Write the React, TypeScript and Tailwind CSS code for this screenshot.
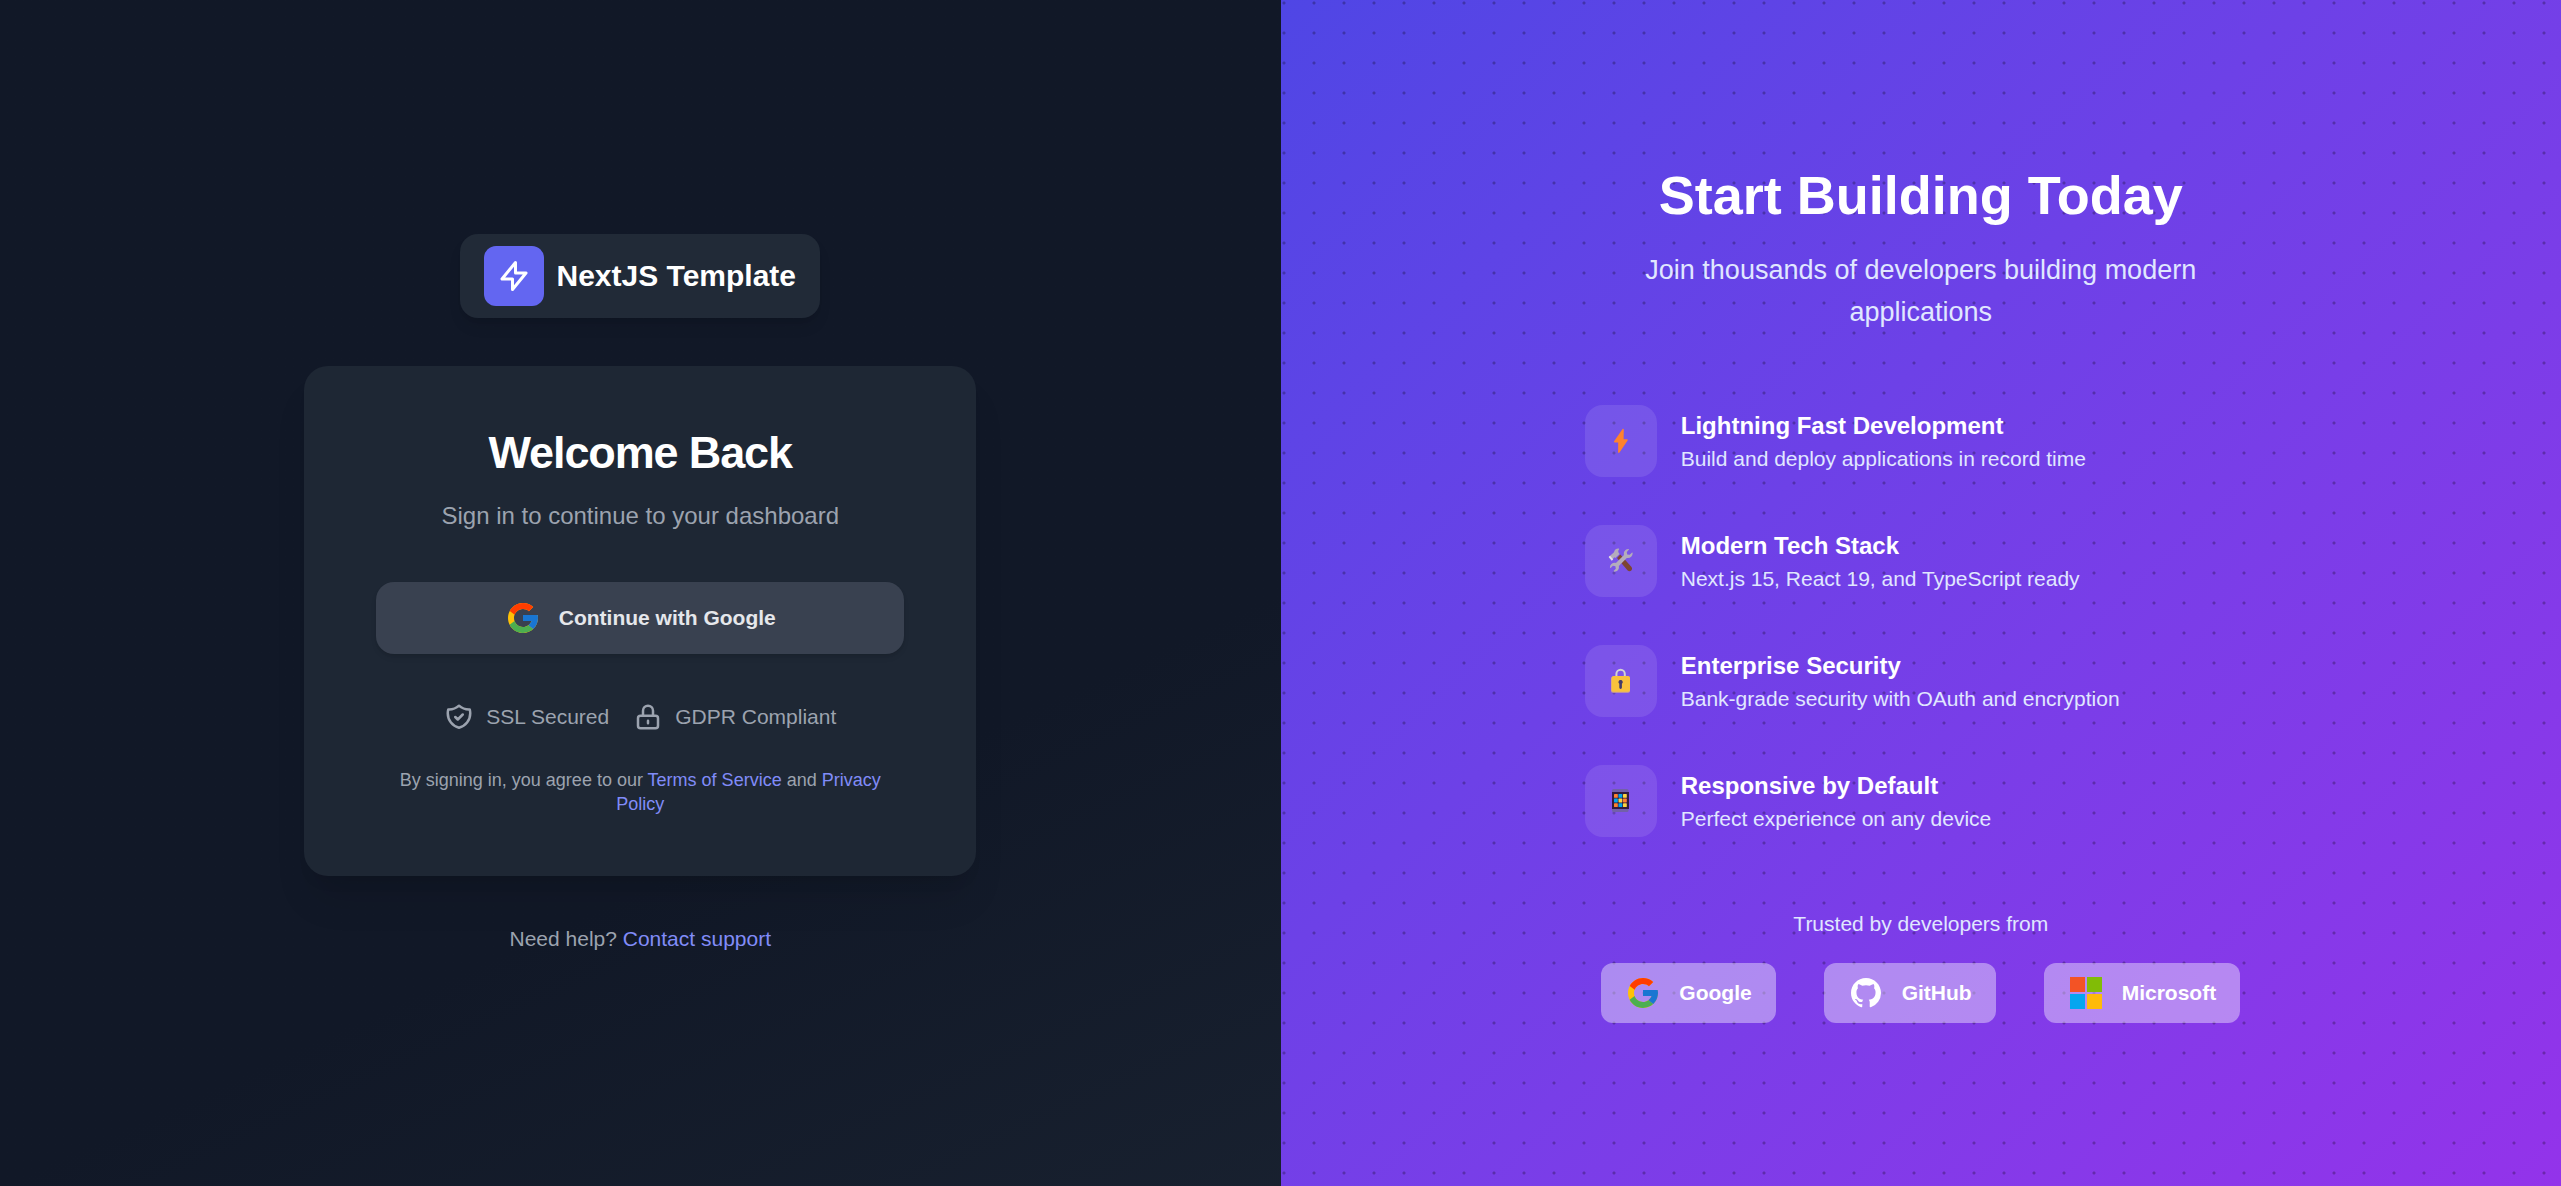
import type { ReactNode } from "react";
import { FcGoogle } from "react-icons/fc";

const outline = {
  viewBox: "0 0 24 24",
  fill: "none",
  stroke: "currentColor",
  strokeWidth: 2,
  strokeLinecap: "round",
  strokeLinejoin: "round",
  "aria-hidden": true,
} as const;

function BoltOutline() {
  return (
    <svg {...outline} className="size-9">
      <path d="M13 10V3L4 14h7v7l9-11h-7z" />
    </svg>
  );
}

function ShieldCheck() {
  return (
    <svg {...outline} className="size-[30px]">
      <path d="M9 12l2 2 4-4m5.618-4.016A11.955 11.955 0 0112 2.944a11.955 11.955 0 01-8.618 3.04A12.02 12.02 0 003 9c0 5.591 3.824 10.29 9 11.622 5.176-1.332 9-6.03 9-11.622 0-1.042-.133-2.052-.382-3.016z" />
    </svg>
  );
}

function LockOutline() {
  return (
    <svg {...outline} className="size-[30px]">
      <path d="M12 15v2m-6 4h12a2 2 0 002-2v-6a2 2 0 00-2-2H6a2 2 0 00-2 2v6a2 2 0 002 2zm10-10V7a4 4 0 00-8 0v4h8z" />
    </svg>
  );
}

function GitHubMark() {
  return (
    <svg viewBox="0 0 24 24" fill="currentColor" className="size-9" aria-hidden="true">
      <path
        fillRule="evenodd"
        clipRule="evenodd"
        d="M12 2C6.477 2 2 6.484 2 12.017c0 4.425 2.865 8.18 6.839 9.504.5.092.682-.217.682-.483 0-.237-.008-.868-.013-1.703-2.782.605-3.369-1.343-3.369-1.343-.454-1.158-1.11-1.466-1.11-1.466-.908-.62.069-.608.069-.608 1.003.07 1.531 1.032 1.531 1.032.892 1.53 2.341 1.088 2.91.832.092-.647.35-1.088.636-1.338-2.22-.253-4.555-1.113-4.555-4.951 0-1.093.39-1.988 1.029-2.688-.103-.253-.446-1.272.098-2.65 0 0 .84-.27 2.75 1.026A9.564 9.564 0 0112 6.844c.85.004 1.705.115 2.504.337 1.909-1.296 2.747-1.027 2.747-1.027.546 1.379.202 2.398.1 2.651.64.7 1.028 1.595 1.028 2.688 0 3.848-2.339 4.695-4.566 4.943.359.309.678.92.678 1.855 0 1.338-.012 2.419-.012 2.747 0 .268.18.58.688.482A10.019 10.019 0 0022 12.017C22 6.484 17.522 2 12 2z"
      />
    </svg>
  );
}

function MicrosoftLogo() {
  return (
    <svg viewBox="0 0 36 36" className="size-9" aria-hidden="true">
      <path fill="#f35325" d="M2 2h15v15H2z" />
      <path fill="#81bc06" d="M19 2h15v15H19z" />
      <path fill="#05a6f0" d="M2 19h15v15H2z" />
      <path fill="#ffba08" d="M19 19h15v15H19z" />
    </svg>
  );
}

function BoltArt() {
  return (
    <svg viewBox="0 0 32 32" className="size-8" aria-hidden="true">
      <path
        fill="#ff822d"
        d="M17.400 4.300 9.100 16.300c-.3.600 0 1.200.6 1.200h3.500l-.100 9.700c0 .9.900 1.100 1.400.4l8.100-12.100c.3-.6 0-1.200-.6-1.200h-3.400l.200-9.600c0-1-.9-1.200-1.400-.4Z"
      />
    </svg>
  );
}

function ToolsArt() {
  return (
    <svg viewBox="0 0 32 32" className="size-8" aria-hidden="true">
      <path d="m12 13 3.300-3.400 11 12.200c1 1.100 1 2.600 0 3.600s-2.600 1-3.600 0z" fill="#7d4533" />
      <path
        d="M3.700 12 9 7.200c.4-2 1.800-3.700 4.500-3.700.6 0 .8.6.5 1-.9 1.100-1 2.200-.2 3.400l.8 1.200-4.300 4-1-.9-2.600 3.200z"
        fill="#b4acbc"
      />
      <path d="m3.700 12 1.300-1.200 3.200 3.500-1.400 1.500z" fill="#e4dfe9" />
      <path
        d="M23.300 4c.5-.2.900.4.500.8l-2 2.100.4 2.500 2.500.4 2.100-2c.4-.4 1-.1.9.5-.2 3.300-2.900 5.300-5.900 4.600l-8 8c.8 3-1.300 5.600-4.500 5.800-.6 0-.9-.5-.5-.9l2-2.100-.4-2.500-2.500-.4-2 2c-.4.4-1 .1-1-.5.3-3.200 3.100-5 6-4.300l8.100-8c-.8-3 1.100-5.800 4.300-6z"
        fill="#b4acbc"
      />
    </svg>
  );
}

function LockArt() {
  return (
    <svg viewBox="0 0 32 32" className="size-8" aria-hidden="true">
      <path d="M11.400 12.500V9a4.200 4.200 0 0 1 8.400 0v3.500" fill="none" stroke="#d3d3d3" strokeWidth="2" />
      <rect x="6" y="11.500" width="19" height="16.200" rx="2" fill="#d3a58c" />
      <rect x="6.700" y="11" width="18.300" height="15.800" rx="2" fill="#f9c23c" />
      <path d="M15.600 15a2.100 2.100 0 0 0-1.300 3.800v3.800a1.300 1.300 0 0 0 2.600 0v-3.800a2.100 2.100 0 0 0-1.300-3.800z" fill="#433b6b" />
    </svg>
  );
}

const keypad = [
  ["#ff822d", "#00a6ed", "#fcd53f"],
  ["#00a6ed", "#fcd53f", "#ff822d"],
  ["#ff822d", "#00a6ed", "#fcd53f"],
];

function PhoneArt() {
  return (
    <svg viewBox="0 0 32 32" className="size-8" aria-hidden="true">
      <rect x="7" y="4" width="16.500" height="23" rx="1.500" fill="#7260a8" />
      <rect x="7" y="7" width="17" height="17" fill="#321b41" />
      {keypad.map((row, y) =>
        row.map((color, x) => (
          <rect key={`${x}-${y}`} x={9 + x * 4.5} y={9 + y * 4.6} width="3.800" height="3.800" rx=".6" fill={color} />
        )),
      )}
    </svg>
  );
}

const features: { art: ReactNode; title: string; text: string }[] = [
  { art: <BoltArt />, title: "Lightning Fast Development", text: "Build and deploy applications in record time" },
  { art: <ToolsArt />, title: "Modern Tech Stack", text: "Next.js 15, React 19, and TypeScript ready" },
  { art: <LockArt />, title: "Enterprise Security", text: "Bank-grade security with OAuth and encryption" },
  { art: <PhoneArt />, title: "Responsive by Default", text: "Perfect experience on any device" },
];

const companies: { logo: ReactNode; name: string }[] = [
  { logo: <FcGoogle className="size-9" aria-hidden="true" />, name: "Google" },
  { logo: <GitHubMark />, name: "GitHub" },
  { logo: <MicrosoftLogo />, name: "Microsoft" },
];

function SignIn() {
  return (
    <section className="flex flex-col items-center justify-center gap-12 px-6 pt-0.5 text-[21px] leading-[30px] text-[#9ca3af]">
      <div className="flex items-center gap-3 rounded-[18px] bg-[#212a37] px-6 py-3 shadow-lg">
        <div className="flex size-[60px] items-center justify-center rounded-xl bg-[#6366f1] text-white">
          <BoltOutline />
        </div>
        <span className="text-[30px] leading-[42px] font-bold text-white">NextJS Template</span>
      </div>

      <main className="w-full max-w-[672px] rounded-3xl bg-[#1e2734] px-[72px] py-[60px] text-center shadow-[0_30px_38px_-8px_rgba(0,0,0,0.1),0_12px_15px_-9px_rgba(0,0,0,0.1)]">
        <h1 className="text-[45px] leading-[54px] font-bold tracking-tight text-white">Welcome Back</h1>
        <p className="mt-[18px] text-2xl leading-9">Sign in to continue to your dashboard</p>
        <button
          type="button"
          className="mt-12 flex h-[72px] w-full items-center justify-center gap-[18px] rounded-[18px] bg-[#394150] font-bold text-[#e5e7eb] shadow-md"
        >
          <FcGoogle className="size-9" aria-hidden="true" />
          Continue with Google
        </button>
        <div className="mt-12 flex items-center justify-center gap-6">
          <span className="flex items-center gap-3">
            <ShieldCheck />
            SSL Secured
          </span>
          <span className="flex items-center gap-3">
            <LockOutline />
            GDPR Compliant
          </span>
        </div>
        <p className="mt-9 text-lg leading-6">
          By signing in, you agree to our{" "}
          <a href="#terms" className="text-[#818cf8]">Terms of Service</a> and{" "}
          <a href="#privacy" className="text-[#818cf8]">Privacy Policy</a>
        </p>
      </main>

      <p>
        Need help? <a href="#support" className="text-[#818cf8]">Contact support</a>
      </p>
    </section>
  );
}

function Showcase() {
  return (
    <section className="bg-linear-to-br from-[#4f46e5] to-[#9333ea]">
      <div className="flex h-full flex-col items-center justify-center bg-[radial-gradient(circle_at_3px_3px,rgba(0,0,0,0.26)_1px,transparent_2px)] bg-size-[30px_30px] px-6 pt-0.5 text-[21px] leading-[30px] text-[#e0e7ff]">
        <div className="w-full max-w-[672px]">
          <header className="text-center">
            <h2 className="text-[54px] leading-[60px] font-bold text-white">Start Building Today</h2>
            <p className="mt-6 text-[27px] leading-[42px]">
              Join thousands of developers building modern applications
            </p>
          </header>
          <ul className="mt-[72px] flex flex-col gap-12">
            {features.map((f) => (
              <li key={f.title} className="flex items-center gap-6">
                <div className="flex size-[72px] shrink-0 items-center justify-center rounded-[18px] bg-white/10">
                  {f.art}
                </div>
                <div>
                  <h3 className="text-2xl leading-9 font-bold text-white">{f.title}</h3>
                  <p>{f.text}</p>
                </div>
              </li>
            ))}
          </ul>
          <p className="mt-[72px] text-center">Trusted by developers from</p>
          <ul className="mt-6 flex justify-center gap-12">
            {companies.map((c) => (
              <li
                key={c.name}
                className="flex h-[60px] items-center gap-[18px] rounded-xl bg-white/40 px-6 font-bold text-white"
              >
                {c.logo}
                {c.name}
              </li>
            ))}
          </ul>
        </div>
      </div>
    </section>
  );
}

export default function App() {
  return (
    <div className="grid min-h-screen grid-cols-2 bg-linear-to-br from-[#111827] via-[#111827] to-[#1f2937] font-['Liberation_Sans',Arial,sans-serif]">
      <SignIn />
      <Showcase />
    </div>
  );
}
